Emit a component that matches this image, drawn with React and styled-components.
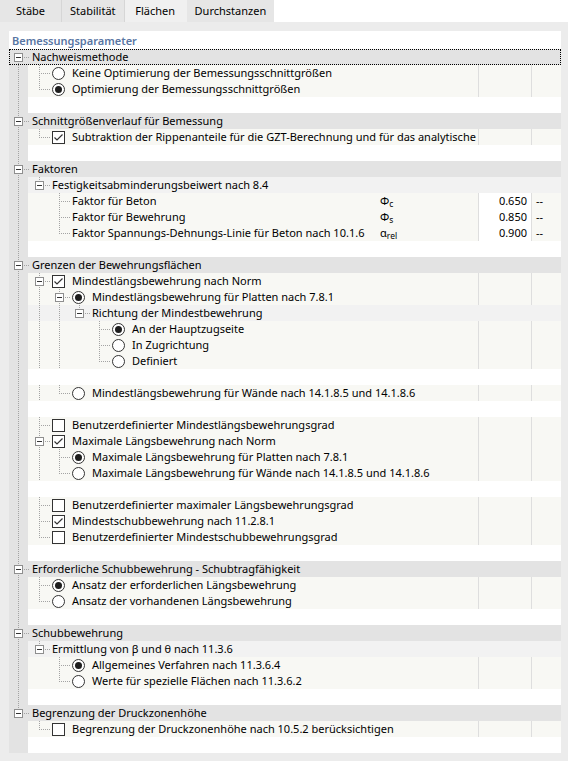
import React from 'react'
import styled, { createGlobalStyle } from 'styled-components'

const GlobalStyle = createGlobalStyle`
	html, body {
		margin: 0;
		padding: 0;
		background: #ffffff;
	}
	body {
		font-family: 'Noto Sans', 'Liberation Sans', sans-serif;
		font-size: 11px;
		color: #000;
	}
`

// data
const tabs = ['Stäbe', 'Stabilität', 'Flächen', 'Durchstanzen']

const tree = [
	{
		label: 'Nachweismethode',
		focused: true,
		children: [
			{ label: 'Keine Optimierung der Bemessungsschnittgrößen', icon: 'radio' },
			{ label: 'Optimierung der Bemessungsschnittgrößen', icon: 'radio', checked: true },
		],
	},
	{
		label: 'Schnittgrößenverlauf für Bemessung',
		children: [
			{
				label: 'Subtraktion der Rippenanteile für die GZT-Berechnung und für das analytische',
				icon: 'check',
				checked: true,
			},
		],
	},
	{
		label: 'Faktoren',
		children: [
			{
				label: 'Festigkeitsabminderungsbeiwert nach 8.4',
				children: [
					{ label: 'Faktor für Beton', sym: ['Φ', 'c'], value: '0.650', unit: '--' },
					{ label: 'Faktor für Bewehrung', sym: ['Φ', 's'], value: '0.850', unit: '--' },
					{
						label: 'Faktor Spannungs-Dehnungs-Linie für Beton nach 10.1.6',
						sym: ['α', 'rel'],
						value: '0.900',
						unit: '--',
					},
				],
			},
		],
	},
	{
		label: 'Grenzen der Bewehrungsflächen',
		children: [
			{
				label: 'Mindestlängsbewehrung nach Norm',
				icon: 'check',
				checked: true,
				children: [
					{
						label: 'Mindestlängsbewehrung für Platten nach 7.8.1',
						icon: 'radio',
						checked: true,
						children: [
							{
								label: 'Richtung der Mindestbewehrung',
								children: [
									{ label: 'An der Hauptzugseite', icon: 'radio', checked: true },
									{ label: 'In Zugrichtung', icon: 'radio' },
									{ label: 'Definiert', icon: 'radio' },
								],
							},
						],
					},
					{ label: 'Mindestlängsbewehrung für Wände nach 14.1.8.5 und 14.1.8.6', icon: 'radio' },
				],
			},
			{ label: 'Benutzerdefinierter Mindestlängsbewehrungsgrad', icon: 'check' },
			{
				label: 'Maximale Längsbewehrung nach Norm',
				icon: 'check',
				checked: true,
				children: [
					{ label: 'Maximale Längsbewehrung für Platten nach 7.8.1', icon: 'radio', checked: true },
					{ label: 'Maximale Längsbewehrung für Wände nach 14.1.8.5 und 14.1.8.6', icon: 'radio' },
				],
			},
			{ label: 'Benutzerdefinierter maximaler Längsbewehrungsgrad', icon: 'check' },
			{ label: 'Mindestschubbewehrung nach 11.2.8.1', icon: 'check', checked: true },
			{ label: 'Benutzerdefinierter Mindestschubbewehrungsgrad', icon: 'check' },
		],
	},
	{
		label: 'Erforderliche Schubbewehrung - Schubtragfähigkeit',
		children: [
			{ label: 'Ansatz der erforderlichen Längsbewehrung', icon: 'radio', checked: true },
			{ label: 'Ansatz der vorhandenen Längsbewehrung', icon: 'radio' },
		],
	},
	{
		label: 'Schubbewehrung',
		children: [
			{
				label: 'Ermittlung von β und θ nach 11.3.6',
				children: [
					{ label: 'Allgemeines Verfahren nach 11.3.6.4', icon: 'radio', checked: true },
					{ label: 'Werte für spezielle Flächen nach 11.3.6.2', icon: 'radio' },
				],
			},
		],
	},
	{
		label: 'Begrenzung der Druckzonenhöhe',
		children: [
			{ label: 'Begrenzung der Druckzonenhöhe nach 10.5.2 berücksichtigen', icon: 'check' },
		],
	},
]

// slot centre of a tree level, relative to the row's left edge
const slot = (level) => (level === 0 ? 9 : 30 + 20 * (level - 1))

// flatten the tree into rows, with the guide lines each row has to draw
const flatten = (nodes, level = 0, lines = [], out = []) => {
	nodes.forEach((node, i) => {
		const hasNext = i < nodes.length - 1
		const kids = node.children || []
		out.push({
			kind: 'node',
			node,
			level,
			lines,
			top: level > 0 || i > 0,
			bottom: hasNext,
			expander: kids.length > 0,
		})
		if (kids.length) {
			const inner = hasNext ? [...lines, level] : lines
			flatten(kids, level + 1, inner, out)
			const last = kids[kids.length - 1]
			if (!last.children) out.push({ kind: 'spacer', lines: inner })
		}
	})
	return out
}

const rows = flatten(tree)

// styled components
const Page = styled.div`
	width: 568px;
	height: 761px;
	display: flex;
	flex-direction: column;
	overflow: hidden;
`

const TabStrip = styled.div`
	display: flex;
	height: 22px;
	background: #ffffff;
`

const Tab = styled.div`
	min-width: 62px;
	padding: 0 8px;
	box-sizing: border-box;
	text-align: center;
	line-height: 22px;
	font-size: 11px;
	background: ${(p) => (p.$active ? '#f0f0f0' : '#e6e6e6')};
	border-right: 1px solid ${(p) => (p.$active ? '#f0f0f0' : '#d6d6d6')};

	&:last-child {
		border-right: none;
	}
`

const Panel = styled.div`
	flex: 1;
	background: #ececec;
	padding: 9px 7px 8px 9px;
	display: flex;
`

const Sheet = styled.div`
	flex: 1;
	background: #ffffff;
	padding-top: 2px;
	display: flex;
	flex-direction: column;
`

const Caption = styled.div`
	height: 16px;
	line-height: 16px;
	padding-left: 3px;
	font-weight: 600;
	color: #5875a3;
`

const rowBg = {
	root: '#e3e3e3',
	group: '#f2f2f2',
	item: '#f8f8f4',
	spacer: '#ffffff',
}

const Row = styled.div`
	display: grid;
	grid-template-columns: 1fr 100px 53px 30px;
	height: 16px;
	line-height: 16px;
	background: ${(p) =>
		p.$kind === 'root'
			? rowBg.root
			: `linear-gradient(to right, ${rowBg.root} 19px, ${rowBg[p.$kind]} 19px)`};
	${(p) => p.$focused && 'outline: 1px dotted #000; outline-offset: -1px;'}
`

const Label = styled.div`
	grid-column: ${(p) => (p.$span ? `span ${p.$span}` : 'auto')};
	display: flex;
	align-items: center;
	white-space: nowrap;
	min-width: 0;
`

const Guides = styled.svg`
	flex: none;
	display: block;
`

const Mark = styled.svg`
	flex: none;
	display: block;
	margin-right: 7px;
`

const Symbol = styled.div`
	white-space: nowrap;
	padding-left: 2px;

	sub {
		font-size: 8.5px;
		vertical-align: -2px;
		line-height: 0;
	}
`

const Value = styled.div`
	border-left: 1px solid #dedede;
	background: ${(p) => (p.$filled ? '#ffffff' : 'transparent')};
	text-align: right;
	padding-right: 4px;
`

const Unit = styled.div`
	border-left: 1px solid #dedede;
	padding-left: 4px;
`

// components
const DOT = '#a3a3a3'

const TreeGuides = ({ row }) => {
	const lvl = row.kind === 'node' ? row.level : -1
	const c = lvl >= 0 ? slot(lvl) : 0
	const width = row.kind === 'node' ? c + 13 + (lvl === 0 ? 1 : 0) : 20
	return (
		<Guides width={width} height="16">
			{row.lines.map((l) => (
				<line
					key={l}
					x1={slot(l) + 0.5}
					x2={slot(l) + 0.5}
					y1="0"
					y2="16"
					stroke={DOT}
					strokeDasharray="1 1"
				/>
			))}
			{row.kind === 'node' && (
				<>
					{row.top && (
						<line x1={c + 0.5} x2={c + 0.5} y1="0" y2="8" stroke={DOT} strokeDasharray="1 1" />
					)}
					{row.bottom && (
						<line x1={c + 0.5} x2={c + 0.5} y1="8" y2="16" stroke={DOT} strokeDasharray="1 1" />
					)}
					<line x1={c} x2={c + 12} y1="8.5" y2="8.5" stroke={DOT} strokeDasharray="1 1" />
					{row.expander && (
						<>
							<rect x={c - 3.5} y="4.5" width="8" height="8" fill="#fff" stroke="#8e8e8e" />
							<line x1={c - 2} x2={c + 3} y1="8.5" y2="8.5" stroke="#333" />
						</>
					)}
				</>
			)}
		</Guides>
	)
}

const CheckMark = ({ checked }) => (
	<Mark width="13" height="13" viewBox="0 0 13 13">
		<rect x="0.5" y="0.5" width="12" height="12" fill="#fff" stroke="#333" />
		{checked && (
			<polyline points="2.5,6.5 5,9 10.5,3.5" fill="none" stroke="#333" strokeWidth="1.2" />
		)}
	</Mark>
)

const RadioMark = ({ checked }) => (
	<Mark width="13" height="13" viewBox="0 0 13 13">
		<circle cx="6.5" cy="6.5" r="6" fill="#fff" stroke="#333" />
		{checked && <circle cx="6.5" cy="6.5" r="3.5" fill="#1e1e1e" />}
	</Mark>
)

const TreeRow = ({ row }) => {
	if (row.kind === 'spacer') {
		return (
			<Row $kind="spacer">
				<Label $span={4}>
					<TreeGuides row={row} />
				</Label>
			</Row>
		)
	}

	const { node, level } = row
	const isItem = node.icon || node.value
	const kind = level === 0 ? 'root' : isItem ? 'item' : 'group'

	return (
		<Row $kind={kind} $focused={node.focused}>
			<Label $span={isItem ? (node.sym ? 1 : 2) : 4}>
				<TreeGuides row={row} />
				{node.icon === 'check' && <CheckMark checked={node.checked} />}
				{node.icon === 'radio' && <RadioMark checked={node.checked} />}
				<span>{node.label}</span>
			</Label>
			{isItem && node.sym && (
				<Symbol>
					{node.sym[0]}
					<sub>{node.sym[1]}</sub>
				</Symbol>
			)}
			{isItem && <Value $filled={!!node.value}>{node.value}</Value>}
			{isItem && <Unit>{node.unit}</Unit>}
		</Row>
	)
}

const App = () => (
	<Page>
		<GlobalStyle />
		<TabStrip>
			{tabs.map((t) => (
				<Tab key={t} $active={t === 'Flächen'}>
					{t}
				</Tab>
			))}
		</TabStrip>
		<Panel>
			<Sheet>
				<Caption>Bemessungsparameter</Caption>
				{rows.map((row, i) => (
					<TreeRow key={i} row={row} />
				))}
			</Sheet>
		</Panel>
	</Page>
)

export default App
